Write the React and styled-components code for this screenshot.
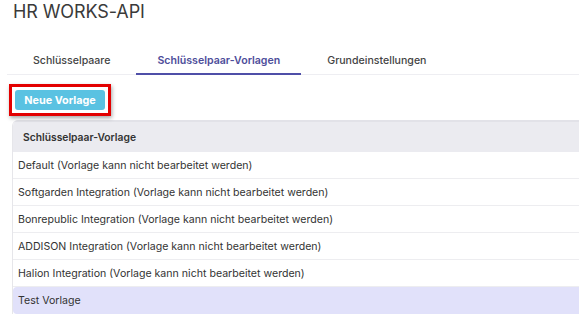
import React from 'react';
import styled, { createGlobalStyle } from 'styled-components';

const GlobalStyle = createGlobalStyle`
  body {
    margin: 0;
    background: #ffffff;
    font-family: Inter, "Noto Sans", "Liberation Sans", sans-serif;
    color: #333333;
  }
`;

const Page = styled.div`
  width: 579px;
  height: 328px;
  overflow: hidden;
  padding-top: 1px;
  box-sizing: border-box;
`;

const Title = styled.h1`
  margin: 0 0 0 13px;
  font-size: 18px;
  font-weight: 400;
  line-height: 22px;
  color: #3a3a3a;
  letter-spacing: -0.1px;
`;

const TabBar = styled.div`
  display: flex;
  gap: 5px;
  margin: 24px 0 0 7px;
  padding-left: 5px;
  border-bottom: 1px solid #eeeef2;
`;

const Tab = styled.div`
  padding: 0 21px;
  height: 26px;
  display: flex;
  align-items: center;
  font-size: 10.6px;
  font-weight: ${(p) => (p.$active ? 600 : 500)};
  color: ${(p) => (p.$active ? '#4d4d9a' : '#444444')};
  border-bottom: 2px solid ${(p) => (p.$active ? '#4f4fa8' : 'transparent')};
  margin-bottom: -1px;
`;

const Highlight = styled.div`
  display: inline-flex;
  margin: 9px 0 0 9px;
  padding: 3px;
  border: 3px solid #e30000;
  box-shadow: 1px 2px 4px rgba(0, 0, 0, 0.35);
`;

const Button = styled.button`
  border: none;
  border-radius: 3px;
  background: #5ac2e2;
  color: #ffffff;
  font-family: inherit;
  font-size: 10.8px;
  font-weight: 700;
  width: 90px;
  height: 20px;
  padding: 0;
  cursor: pointer;
`;

const Table = styled.div`
  margin: 4px 0 0 12px;
  border-left: 1px solid #e6e6ea;
  border-top-left-radius: 6px;
  overflow: hidden;
`;

const HeaderRow = styled.div`
  height: 30px;
  display: flex;
  align-items: center;
  padding-left: 10px;
  background: #ebebf0;
  border-top: 2px solid #e2e2e8;
  font-size: 10.3px;
  font-weight: 600;
  color: #333333;
`;

const Row = styled.div`
  height: 26px;
  display: flex;
  align-items: center;
  padding-left: 5px;
  font-size: 10.6px;
  color: #333333;
  border-bottom: 1px solid ${(p) => (p.$selected ? 'transparent' : '#ededf0')};
  background: ${(p) => (p.$selected ? '#e1e1fa' : '#ffffff')};
  border-radius: ${(p) => (p.$selected ? '4px 0 0 4px' : '0')};
`;

const templates = [
  'Default (Vorlage kann nicht bearbeitet werden)',
  'Softgarden Integration (Vorlage kann nicht bearbeitet werden)',
  'Bonrepublic Integration (Vorlage kann nicht bearbeitet werden)',
  'ADDISON Integration (Vorlage kann nicht bearbeitet werden)',
  'Halion Integration (Vorlage kann nicht bearbeitet werden)',
  'Test Vorlage',
];

const App = () => {
  return (
    <Page>
      <GlobalStyle />
      <Title>HR WORKS-API</Title>
      <TabBar>
        <Tab>Schlüsselpaare</Tab>
        <Tab $active>Schlüsselpaar-Vorlagen</Tab>
        <Tab>Grundeinstellungen</Tab>
      </TabBar>
      <Highlight>
        <Button>Neue Vorlage</Button>
      </Highlight>
      <Table>
        <HeaderRow>Schlüsselpaar-Vorlage</HeaderRow>
        {templates.map((name, i) => (
          <Row key={name} $selected={i === templates.length - 1}>
            {name}
          </Row>
        ))}
      </Table>
    </Page>
  );
};

export default App;
